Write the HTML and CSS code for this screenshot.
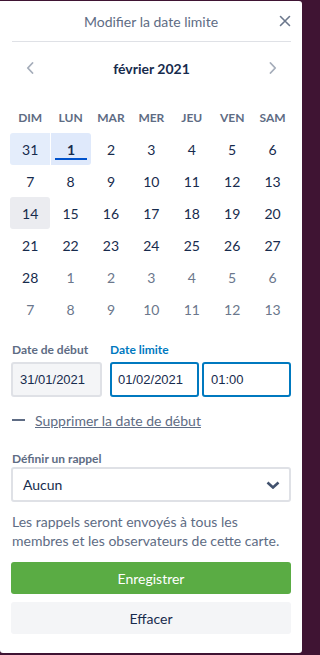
FILE: index.html
```html
<!DOCTYPE html>
<html lang="fr">
<head>
<meta charset="utf-8">
<title>Modifier la date limite</title>
<link rel="stylesheet" href="styles.css">
</head>
<body>
<div class="popover">
  <div class="header">
    <span class="title">Modifier la date limite</span>
    <svg class="close" width="12" height="12" viewBox="0 0 12 12"><path d="M1.5 1.5 L10.5 10.5 M10.5 1.5 L1.5 10.5" stroke="#6b778c" stroke-width="1.6" stroke-linecap="round" fill="none"/></svg>
  </div>
  <div class="divider"></div>
  <div class="content">
    <div class="month-nav">
      <svg class="chev" width="8" height="12" viewBox="0 0 8 12"><path d="M6.5 1 L1.8 6 L6.5 11" stroke="#a5adba" stroke-width="1.8" fill="none" stroke-linecap="round" stroke-linejoin="round"/></svg>
      <span class="month">février 2021</span>
      <svg class="chev" width="8" height="12" viewBox="0 0 8 12"><path d="M1.5 1 L6.2 6 L1.5 11" stroke="#a5adba" stroke-width="1.8" fill="none" stroke-linecap="round" stroke-linejoin="round"/></svg>
    </div>
    <div class="weekdays">
      <span>DIM</span><span>LUN</span><span>MAR</span><span>MER</span><span>JEU</span><span>VEN</span><span>SAM</span>
    </div>
    <div class="days">
      <span class="day in-range">31</span><span class="day selected"><b>1</b></span><span class="day">2</span><span class="day">3</span><span class="day">4</span><span class="day">5</span><span class="day">6</span>
      <span class="day">7</span><span class="day">8</span><span class="day">9</span><span class="day">10</span><span class="day">11</span><span class="day">12</span><span class="day">13</span>
      <span class="day today">14</span><span class="day">15</span><span class="day">16</span><span class="day">17</span><span class="day">18</span><span class="day">19</span><span class="day">20</span>
      <span class="day">21</span><span class="day">22</span><span class="day">23</span><span class="day">24</span><span class="day">25</span><span class="day">26</span><span class="day">27</span>
      <span class="day">28</span><span class="day other">1</span><span class="day other">2</span><span class="day other">3</span><span class="day other">4</span><span class="day other">5</span><span class="day other">6</span>
      <span class="day other">7</span><span class="day other">8</span><span class="day other">9</span><span class="day other">10</span><span class="day other">11</span><span class="day other">12</span><span class="day other">13</span>
    </div>

    <div class="dates">
      <div class="field start">
        <label class="label">Date de début</label>
        <div class="input disabled">31/01/2021</div>
      </div>
      <div class="field due">
        <label class="label active">Date limite</label>
        <div class="due-inputs">
          <div class="input focus date">01/02/2021</div>
          <div class="input focus time">01:00</div>
        </div>
      </div>
    </div>

    <div class="remove-start">
      <span class="dash"></span>
      <a class="link">Supprimer la date de début</a>
    </div>

    <label class="label reminder-label">Définir un rappel</label>
    <div class="select">
      <span>Aucun</span>
      <svg width="14" height="8" viewBox="0 0 14 8"><path d="M1.5 1.5 L7 6.5 L12.5 1.5" stroke="#42526e" stroke-width="2.6" fill="none" stroke-linejoin="miter"/></svg>
    </div>
    <p class="help">Les rappels seront envoyés à tous les membres et les observateurs de cette carte.</p>

    <button class="btn primary">Enregistrer</button>
    <button class="btn secondary">Effacer</button>
  </div>
</div>
</body>
</html>
```

FILE: styles.css
```css
html, body {
  margin: 0;
  padding: 0;
}
body {
  background: #3f1433;
  width: 304px;
  height: 655px;
  overflow: hidden;
  font-family: Lato, "Noto Sans", sans-serif;
  color: #172b4d;
}
.popover {
  margin-top: 1px;
  width: 302px;
  height: 652px;
  background: #fff;
  border-radius: 0 3px 3px 3px;
  box-sizing: border-box;
}
.header {
  position: relative;
  height: 40px;
  display: flex;
  align-items: center;
  justify-content: center;
}
.title {
  font-size: 14px;
  color: #5e6c84;
}
.close {
  position: absolute;
  right: 11px;
  top: 14px;
}
.divider {
  height: 1px;
  background: #dfe1e6;
  margin: 0 11px 0 12px;
}
.content {
  padding: 0 11px 0 11px;
}
.month-nav {
  margin-top: 11px;
  height: 30px;
  display: flex;
  align-items: center;
  justify-content: space-between;
  padding: 0 14px 0 15px;
}
.month {
  font-weight: 700;
  font-size: 14px;
  color: #172b4d;
}
.weekdays, .days {
  display: grid;
  grid-template-columns: repeat(7, 40.4px);
  margin-left: -1px;
}
.weekdays {
  margin-top: 18px;
  height: 32px;
  align-items: center;
}
.weekdays span {
  text-align: center;
  font-size: 12px;
  font-weight: 700;
  color: #5e6c84;
}
.days {
  margin-top: 0;
  grid-auto-rows: 32px;
}
.day {
  display: flex;
  align-items: center;
  justify-content: center;
  font-size: 14px;
  color: #172b4d;
  border-radius: 3px;
  position: relative;
}
.day.other {
  color: #6b778c;
}
.day.in-range {
  background: #e4edfb;
  border-radius: 3px 0 0 3px;
}
.day.selected {
  background: #dfe9fb;
  margin-left: 1px;
  border-radius: 0 3px 3px 0;
}
.day.selected b {
  font-weight: 700;
}
.day.selected::after {
  content: "";
  position: absolute;
  left: 4px;
  right: 4px;
  bottom: 5px;
  height: 2px;
  background: #0052cc;
}
.day.today {
  background: #ebecf0;
}
.dates {
  margin-top: 17px;
  display: flex;
  gap: 8px;
}
.label {
  display: block;
  font-size: 12px;
  font-weight: 700;
  color: #5e6c84;
  line-height: 16px;
  margin-bottom: 4px;
  padding-left: 1px;
}
.label.active {
  color: #0079bf;
  padding-left: 0;
}
.due-inputs {
  display: flex;
  gap: 3px;
}
.input {
  box-sizing: border-box;
  height: 35px;
  border: 2px solid #dfe1e6;
  border-radius: 3px;
  font-family: "Liberation Sans", Arial, sans-serif;
  font-size: 13px;
  color: #172b4d;
  display: flex;
  align-items: center;
  padding-left: 6px;
}
.input.disabled {
  background: #f4f5f7;
  width: 91px;
  padding-left: 7px;
}
.input.focus {
  border-color: #0079bf;
}
.input.date {
  width: 89px;
}
.input.time {
  width: 89px;
  padding-left: 7px;
}
.remove-start {
  margin-top: 13px;
  height: 20px;
  display: flex;
  align-items: center;
  padding-left: 1px;
}
.dash {
  width: 13px;
  height: 2px;
  background: #5e6c84;
  margin-right: 10px;
}
.link {
  font-size: 14px;
  color: #5e6c84;
  text-decoration: underline;
}
.reminder-label {
  margin-top: 21px;
  margin-bottom: 0;
}
.select {
  margin-top: 0;
  box-sizing: border-box;
  height: 35px;
  border: 2px solid #dfe1e6;
  border-radius: 3px;
  display: flex;
  align-items: center;
  justify-content: space-between;
  padding: 0 9px 0 10px;
  font-size: 14px;
  color: #172b4d;
}
.help {
  margin: 10px 0 0 1px;
  font-size: 14px;
  line-height: 19px;
  color: #5e6c84;
}
.btn {
  display: block;
  width: 100%;
  box-sizing: border-box;
  border: 0;
  border-radius: 3px;
  height: 32px;
  font-family: inherit;
  font-size: 14px;
  cursor: pointer;
}
.btn.primary {
  margin-top: 12px;
  background: #5aac44;
  color: #fff;
}
.btn.secondary {
  margin-top: 8px;
  background: #f4f5f7;
  color: #172b4d;
}
```
